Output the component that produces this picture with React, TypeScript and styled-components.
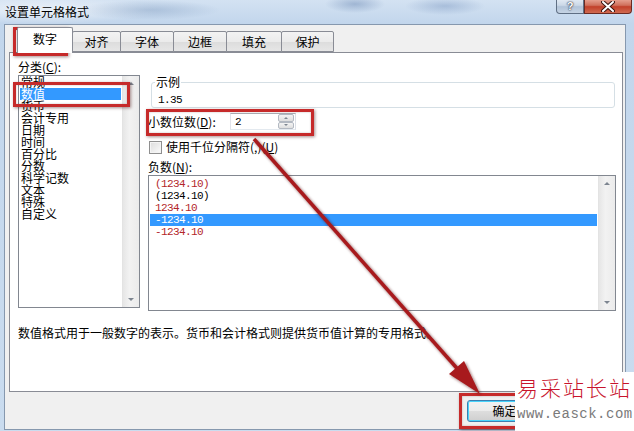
import React from "react"
import styled, { createGlobalStyle } from "styled-components"

const GlobalStyle = createGlobalStyle`
  html, body {
    margin: 0;
    padding: 0;
  }
  body {
    font-family: "Noto Sans CJK SC", "Liberation Sans", sans-serif;
    font-size: 12px;
    color: #000;
  }
`

const Window = styled.div`
  position: relative;
  width: 634px;
  height: 431px;
  overflow: hidden;
  display: flex;
  flex-direction: column;
  background:
    radial-gradient(ellipse 70px 10px at 150px 10px, rgba(110, 140, 180, 0.35), transparent),
    radial-gradient(ellipse 30px 9px at 355px 4px, rgba(100, 130, 175, 0.45), transparent),
    radial-gradient(ellipse 40px 9px at 445px 6px, rgba(110, 140, 185, 0.4), transparent),
    radial-gradient(ellipse 120px 14px at 40px 10px, rgba(255, 255, 255, 0.6), transparent),
    linear-gradient(180deg, #d3e2f2 0px, #c2d6ec 24px, #cadcef 100%);
`

const TitleBar = styled.div`
  height: 24px;
  flex-shrink: 0;
  display: flex;
  align-items: flex-start;
`

const Title = styled.div`
  padding: 5px 0 0 5px;
  line-height: 14px;
  font-size: 12px;
`

const Captions = styled.div`
  margin-left: auto;
  margin-right: 2px;
  display: flex;
`

const CaptionButton = styled.div<{ $close?: boolean }>`
  width: ${(p) => (p.$close ? 48 : 28)}px;
  height: 15px;
  margin-top: -1px;
  box-sizing: border-box;
  border: 1px solid ${(p) => (p.$close ? "#6b2a22" : "#5f6f84")};
  border-top: none;
  border-radius: ${(p) => (p.$close ? "0 0 4px 0" : "0 0 0 4px")};
  background: ${(p) =>
    p.$close
      ? "linear-gradient(180deg, #e9a797 0%, #d0705c 45%, #c2402a 55%, #d06a50 100%)"
      : "linear-gradient(180deg, #e4ecf5 0%, #cbd8e7 45%, #b2c4d9 55%, #c6d4e4 100%)"};
  display: flex;
  align-items: center;
  justify-content: center;
  color: #fff;
  font: bold 11px "Liberation Sans", sans-serif;
  text-shadow: 0 0 2px #223, 0 0 1px #223;
`

const Client = styled.div`
  flex: 1;
  margin: 0 8px 1px 4px;
  background: #f0f0f0;
  border: 1px solid #8698ae;
  padding: 0 2px 0 4px;
  display: flex;
  flex-direction: column;
`

const TabStrip = styled.div`
  height: 27px;
  flex-shrink: 0;
  display: flex;
  align-items: flex-end;
  padding-left: 8px;
`

const Tab = styled.div<{ $w: number; $active?: boolean }>`
  width: ${(p) => p.$w}px;
  height: ${(p) => (p.$active ? 26 : 21)}px;
  margin-bottom: ${(p) => (p.$active ? -1 : 0)}px;
  margin-right: -1px;
  box-sizing: border-box;
  border: 1px solid #898c95;
  border-bottom: ${(p) => (p.$active ? "none" : "1px solid #898c95")};
  border-radius: 2px 2px 0 0;
  background: ${(p) =>
    p.$active ? "#fff" : "linear-gradient(180deg, #f3f3f3 0%, #ebebeb 50%, #dcdcdc 51%, #e6e6e6 100%)"};
  position: relative;
  z-index: ${(p) => (p.$active ? 1 : 0)};
  display: flex;
  align-items: ${(p) => (p.$active ? "flex-start" : "center")};
  padding-top: ${(p) => (p.$active ? 4 : 0)}px;
  justify-content: center;
  line-height: 14px;
`

const Panel = styled.div`
  height: 340px;
  flex-shrink: 0;
  box-sizing: border-box;
  background: #fff;
  border: 1px solid #898c95;
  padding: 6px 6px 0 8px;
  display: flex;
  flex-direction: column;
`

const MainRow = styled.div`
  display: flex;
  gap: 8px;
`

const LeftCol = styled.div`
  width: 122px;
  display: flex;
  flex-direction: column;
`

const RightCol = styled.div`
  width: 468px;
  padding-top: 16px;
  display: flex;
  flex-direction: column;
`

const Label = styled.div`
  line-height: 16px;
  white-space: nowrap;
`

const ListBox = styled.div<{ $h: number }>`
  height: ${(p) => p.$h}px;
  box-sizing: border-box;
  border: 1px solid #828790;
  display: flex;
  background: #fff;
`

const Items = styled.div<{ $top: number }>`
  flex: 1;
  padding-top: ${(p) => p.$top}px;
  display: flex;
  flex-direction: column;
`

const Item = styled.div<{ $selected?: boolean; $red?: boolean; $mono?: boolean; $pad: number }>`
  height: 12px;
  line-height: 12px;
  margin: 0 1px;
  padding-left: ${(p) => p.$pad}px;
  white-space: nowrap;
  background: ${(p) => (p.$selected ? "#3399ff" : "transparent")};
  color: ${(p) => (p.$selected ? "#fff" : p.$red ? "#b3262a" : "#000")};
  font-family: ${(p) =>
    p.$mono ? '"Liberation Mono", monospace' : '"Noto Sans CJK SC", sans-serif'};
  font-size: ${(p) => (p.$mono ? 11 : 12)}px;
  letter-spacing: ${(p) => (p.$mono ? -0.6 : 0)}px;
`

const Scrollbar = styled.div`
  width: 17px;
  flex-shrink: 0;
  background: linear-gradient(90deg, #e6e6e6 0%, #f2f2f2 40%, #ebebeb 100%);
  border-left: 1px solid #e3e3e3;
  display: flex;
  flex-direction: column;
  justify-content: space-between;
  align-items: center;
  padding: 6px 0;
  box-sizing: border-box;
`

const Arrow = styled.div<{ $down?: boolean; $size?: number }>`
  width: 0;
  height: 0;
  border-left: ${(p) => p.$size ?? 3}px solid transparent;
  border-right: ${(p) => p.$size ?? 3}px solid transparent;
  ${(p) =>
    p.$down
      ? `border-top: ${p.$size ?? 3}px solid #7d8590;`
      : `border-bottom: ${p.$size ?? 3}px solid #7d8590;`}
`

const Group = styled.fieldset`
  margin: 0 1px 0 3px;
  padding: 0 6px 0 3px;
  border: 1px solid #d5dfe5;
  border-radius: 3px;
  height: 33px;
  box-sizing: border-box;
`

const Legend = styled.legend`
  padding: 0 1px;
  line-height: 14px;
`

const Sample = styled.div`
  padding: 4px 0 0 3px;
  line-height: 14px;
  font-family: "Liberation Mono", monospace;
  font-size: 11px;
  letter-spacing: -0.6px;
`

const FieldRow = styled.div<{ $top: number }>`
  margin-top: ${(p) => p.$top}px;
  display: flex;
  align-items: center;
`

const FieldLabel = styled.div`
  width: 82px;
  line-height: 16px;
  white-space: nowrap;
`

const SpinBox = styled.div`
  width: 66px;
  height: 17px;
  box-sizing: border-box;
  border: 1px solid;
  border-color: #abadb3 #dbdfe6 #e3e9ef #e2e3ea;
  background: #fff;
  display: flex;
  align-items: center;
  padding-left: 4px;
  font-family: "Liberation Mono", monospace;
  font-size: 11px;
`

const SpinButtons = styled.div`
  margin-left: auto;
  margin-right: 1px;
  width: 16px;
  height: 15px;
  display: flex;
  flex-direction: column;
`

const SpinHalf = styled.div`
  flex: 1;
  box-sizing: border-box;
  border: 1px solid #b3b9c2;
  border-radius: 2px;
  background: linear-gradient(180deg, #f4f4f4, #dedede);
  display: flex;
  align-items: center;
  justify-content: center;
`

const CheckBox = styled.div`
  width: 13px;
  height: 13px;
  box-sizing: border-box;
  margin: 0 4px 0 1px;
  border: 1px solid #8f8f8f;
  background: linear-gradient(135deg, #dcdcdc, #fbfbfb);
  box-shadow: inset 0 0 0 1px #f4f4f4;
`

const Description = styled.div`
  margin-top: 15px;
  line-height: 14px;
  white-space: nowrap;
`

const Footer = styled.div`
  flex: 1;
  display: flex;
  justify-content: flex-end;
  align-items: flex-start;
  padding: 8px 81px 0 0;
`

const Button = styled.div<{ $default?: boolean }>`
  width: 75px;
  height: 22px;
  box-sizing: border-box;
  border: 1px solid ${(p) => (p.$default ? "#3c7fb1" : "#707070")};
  border-radius: 3px;
  background: linear-gradient(180deg, #f2f2f2 0%, #ebebeb 50%, #dddddd 51%, #cfcfcf 100%);
  box-shadow: ${(p) => (p.$default ? "inset 0 0 0 1px #48d3fb" : "inset 0 0 0 1px #fcfcfc")};
  display: flex;
  align-items: center;
  justify-content: center;
  line-height: 14px;
`

const Mark = styled.div<{ $x: number; $y: number; $w: number; $h: number }>`
  position: absolute;
  left: ${(p) => p.$x}px;
  top: ${(p) => p.$y}px;
  width: ${(p) => p.$w}px;
  height: ${(p) => p.$h}px;
  box-sizing: border-box;
  border: 3px solid #c62a2a;
  box-shadow: 1px 1px 3px rgba(60, 0, 0, 0.45), inset 0 0 2px rgba(60, 0, 0, 0.3);
  pointer-events: none;
`

const ArrowLayer = styled.svg`
  position: absolute;
  left: 0;
  top: 0;
  pointer-events: none;
`

const Watermark = styled.div`
  position: absolute;
  left: 515px;
  top: 372px;
  right: 0;
  bottom: 0;
  background: #fff;
  padding: 3px 0 0 2px;
  display: flex;
  flex-direction: column;
`

const WatermarkTitle = styled.div`
  font-family: "Noto Sans CJK SC", serif;
  font-weight: 300;
  font-size: 21px;
  line-height: 24px;
  letter-spacing: 2px;
  color: #c8142c;
`

const WatermarkUrl = styled.div`
  margin-top: 7px;
  font-family: "Liberation Mono", monospace;
  font-size: 14px;
  line-height: 16px;
  letter-spacing: 0.5px;
  color: #7a7a7a;
`

const tabs = [
  { label: "数字", w: 56, active: true },
  { label: "对齐", w: 49 },
  { label: "字体", w: 54 },
  { label: "边框", w: 54 },
  { label: "填充", w: 56 },
  { label: "保护", w: 53 },
]

const categories = ["常规", "数值", "货币", "会计专用", "日期", "时间", "百分比", "分数", "科学记数", "文本", "特殊", "自定义"]

const negatives = [
  { text: "(1234.10)", red: true },
  { text: "(1234.10)" },
  { text: "1234.10", red: true },
  { text: "-1234.10", selected: true },
  { text: "-1234.10", red: true },
]

function App() {
  return (
    <Window>
      <GlobalStyle />
      <TitleBar>
        <Title>设置单元格格式</Title>
        <Captions>
          <CaptionButton>?</CaptionButton>
          <CaptionButton $close>
            <svg width="14" height="11" viewBox="0 0 14 11">
              <path d="M2 1 L12 10 M12 1 L2 10" stroke="#3a1410" strokeWidth="4" strokeLinecap="round" />
              <path d="M2 1 L12 10 M12 1 L2 10" stroke="#fff" strokeWidth="2" strokeLinecap="round" />
            </svg>
          </CaptionButton>
        </Captions>
      </TitleBar>

      <Client>
        <TabStrip>
          {tabs.map((t) => (
            <Tab key={t.label} $w={t.w} $active={t.active}>
              {t.label}
            </Tab>
          ))}
        </TabStrip>

        <Panel>
          <MainRow>
            <LeftCol>
              <Label>
                分类(<u>C</u>):
              </Label>
              <ListBox $h={233}>
                <Items $top={0}>
                  {categories.map((c) => (
                    <Item key={c} $pad={1} $selected={c === "数值"}>
                      {c}
                    </Item>
                  ))}
                </Items>
                <Scrollbar>
                  <Arrow />
                  <Arrow $down />
                </Scrollbar>
              </ListBox>
            </LeftCol>

            <RightCol>
              <Group>
                <Legend>示例</Legend>
                <Sample>1.35</Sample>
              </Group>

              <FieldRow $top={5}>
                <FieldLabel>
                  小数位数(<u>D</u>):
                </FieldLabel>
                <SpinBox>
                  2
                  <SpinButtons>
                    <SpinHalf>
                      <Arrow $size={2} />
                    </SpinHalf>
                    <SpinHalf>
                      <Arrow $size={2} $down />
                    </SpinHalf>
                  </SpinButtons>
                </SpinBox>
              </FieldRow>

              <FieldRow $top={9}>
                <CheckBox />
                <Label>
                  使用千位分隔符(,)(<u>U</u>)
                </Label>
              </FieldRow>

              <FieldRow $top={4}>
                <Label>
                  负数(<u>N</u>):
                </Label>
              </FieldRow>

              <ListBox $h={136}>
                <Items $top={2}>
                  {negatives.map((n, i) => (
                    <Item key={i} $pad={5} $mono $red={n.red} $selected={n.selected}>
                      {n.text}
                    </Item>
                  ))}
                </Items>
                <Scrollbar>
                  <Arrow />
                  <Arrow $down />
                </Scrollbar>
              </ListBox>
            </RightCol>
          </MainRow>

          <Description>数值格式用于一般数字的表示。货币和会计格式则提供货币值计算的专用格式。</Description>
        </Panel>

        <Footer>
          <Button $default>确定</Button>
        </Footer>
      </Client>

      <Mark $x={13} $y={27} $w={55} $h={29} />
      <Mark $x={13} $y={82} $w={117} $h={25} />
      <Mark $x={146} $y={109} $w={168} $h={27} />
      <Mark $x={459} $y={393} $w={84} $h={36} />

      <ArrowLayer width="634" height="431" viewBox="0 0 634 431">
        <defs>
          <filter id="arrowShadow" x="-10%" y="-10%" width="120%" height="120%">
            <feGaussianBlur stdDeviation="1.5" />
          </filter>
        </defs>
        <g filter="url(#arrowShadow)" opacity="0.55" transform="translate(1.5 1.5)">
          <line x1="254" y1="139" x2="462" y2="374" stroke="#501010" strokeWidth="4" />
          <polygon points="480,394 449,374 464,361" fill="#501010" />
        </g>
        <line x1="254" y1="139" x2="462" y2="374" stroke="#a81a1d" strokeWidth="3.5" />
        <polygon points="480,394 449,374 464,361" fill="#a81a1d" />
      </ArrowLayer>

      <Watermark>
        <WatermarkTitle>易采站长站</WatermarkTitle>
        <WatermarkUrl>www.easck.com</WatermarkUrl>
      </Watermark>
    </Window>
  )
}

export default App
